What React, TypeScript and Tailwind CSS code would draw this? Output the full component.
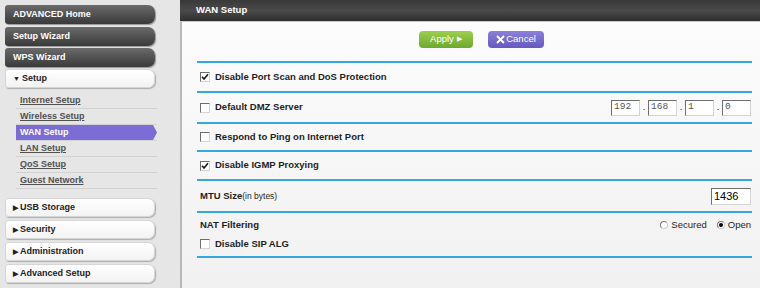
import React from "react";

function Check({ checked }: { checked?: boolean }) {
  return (
    <span className="inline-flex h-[10px] w-[10px] shrink-0 items-center justify-center border border-t-[#6e6e6e] border-l-[#6e6e6e] border-r-[#d4d4d4] border-b-[#d4d4d4] bg-white">
      {checked && (
        <svg width="8" height="8" viewBox="0 0 8 8">
          <path d="M1 3.8 L3 6 L7 1.2" stroke="#1a1a1a" strokeWidth="1.6" fill="none" />
        </svg>
      )}
    </span>
  );
}

function Radio({ on }: { on?: boolean }) {
  return (
    <span className="inline-flex h-[8px] w-[8px] items-center justify-center rounded-full border border-t-[#777] border-l-[#777] border-r-[#ccc] border-b-[#ccc] bg-white">
      {on && <span className="h-[4px] w-[4px] rounded-full bg-black" />}
    </span>
  );
}

function Line() {
  return <div className="h-[2px] bg-[#35a8df]" />;
}

function DarkBtn({ label }: { label: string }) {
  return (
    <div className="flex h-[19px] w-[150px] items-center rounded-l-[3px] rounded-r-[7px] bg-linear-to-b from-[#6b6b6b] to-[#3a3a3a] pl-[8px] text-[9px] font-bold text-white shadow-[1px_1px_1px_rgba(0,0,0,0.35)]">
      {label}
    </div>
  );
}

function LightBtn({ label, open }: { label: string; open?: boolean }) {
  return (
    <div className="flex h-[19px] w-[150px] items-center gap-[2px] rounded-l-[3px] rounded-r-[7px] border border-[#d6d6d6] bg-linear-to-b from-white to-[#f3f3f3] pl-[7px] text-[9px] font-bold text-[#222] shadow-[1px_1px_1px_rgba(0,0,0,0.25)]">
      <span className="text-[7px] leading-none">{open ? "▼" : "▶"}</span>
      {label}
    </div>
  );
}

const subItems = [
  "Internet Setup",
  "Wireless Setup",
  "WAN Setup",
  "LAN Setup",
  "QoS Setup",
  "Guest Network",
];

export default function App() {
  const ip = ["192", "168", "1", "0"];
  return (
    <div className="flex h-[288px] w-[760px] overflow-hidden bg-[#e6e6e6] font-['Liberation_Sans',Arial,sans-serif]">
      <aside className="flex w-[180px] shrink-0 flex-col pl-[5px] pt-[5px]">
        <div className="flex flex-col gap-[2px]">
          <DarkBtn label="ADVANCED Home" />
          <div className="mt-[1px]">
            <DarkBtn label="Setup Wizard" />
          </div>
          <DarkBtn label="WPS Wizard" />
          <LightBtn label="Setup" open />
        </div>
        <div className="ml-[11px] mt-[5px] w-[141px]">
          {subItems.map((item) => (
            <div
              key={item}
              className="flex h-[16px] items-center border-b border-[#d2d2d2]"
            >
              {item === "WAN Setup" ? (
                <div className="flex h-[15px] w-full items-center bg-[#7b6cd6] pl-[4px] text-[9px] font-bold text-white [clip-path:polygon(0_0,calc(100%-4px)_0,100%_50%,calc(100%-4px)_100%,0_100%)]">
                  {item}
                </div>
              ) : (
                <span className="pl-[4px] text-[9px] font-bold text-[#505050] underline">
                  {item}
                </span>
              )}
            </div>
          ))}
        </div>
        <div className="mt-[9px] flex flex-col gap-[3px]">
          <LightBtn label="USB Storage" />
          <LightBtn label="Security" />
          <LightBtn label="Administration" />
          <LightBtn label="Advanced Setup" />
        </div>
      </aside>

      <main className="flex flex-1 flex-col">
        <div className="flex h-[22px] items-center border-b border-[#c8c8c8] bg-linear-to-b from-[#3a3a3a] via-[#4a4a4a] to-[#2f2f2f] pl-[16px] text-[9.5px] font-bold text-white">
          WAN Setup
        </div>
        <div className="flex-1 border-l-2 border-[#b8b8b8] bg-linear-to-b from-[#fcfcfc] to-[#f1f1f1] pl-[15px] pr-[8px] text-[9.5px] text-[#1e1e1e]">
          <div className="mt-[9px] flex h-[17px] gap-[15px] pl-[222px]">
            <button className="flex h-[17px] w-[54px] items-center justify-center gap-[3px] rounded-[4px] bg-linear-to-b from-[#9dce4e] to-[#6da92e] text-[9.5px] text-white">
              Apply <span className="text-[7px]">▶</span>
            </button>
            <button className="flex h-[17px] w-[56px] items-center justify-center rounded-[4px] bg-linear-to-b from-[#8c80dc] to-[#6658bf] text-[9.5px] text-white">
              <svg width="9" height="9" viewBox="0 0 9 9" className="mr-[1px]">
                <path d="M1 1 L8 8 M8 1 L1 8" stroke="white" strokeWidth="1.8" />
              </svg>
              Cancel
            </button>
          </div>
          <div className="mt-[13px]">
            <Line />
            <div className="flex h-[28px] items-center gap-[5px] pl-[3px] font-bold">
              <Check checked />
              Disable Port Scan and DoS Protection
            </div>
            <Line />
            <div className="flex h-[29px] items-center justify-between pl-[3px] pr-[1px]">
              <div className="flex items-center gap-[5px] font-bold">
                <Check />
                Default DMZ Server
              </div>
              <div className="flex items-center">
                {ip.map((v, i) => (
                  <React.Fragment key={i}>
                    {i > 0 && <span className="w-[8px] text-center">.</span>}
                    <div className="flex h-[16px] w-[29px] items-center border border-t-[#6e6e6e] border-l-[#6e6e6e] border-r-[#d4d4d4] border-b-[#d4d4d4] bg-white pl-[2px] font-['Liberation_Mono',monospace] text-[9.5px] text-[#555]">
                      {v}
                    </div>
                  </React.Fragment>
                ))}
              </div>
            </div>
            <Line />
            <div className="flex h-[26px] items-center gap-[5px] pl-[3px] font-bold">
              <Check />
              Respond to Ping on Internet Port
            </div>
            <Line />
            <div className="flex h-[27px] items-center gap-[5px] pl-[3px] font-bold">
              <Check checked />
              Disable IGMP Proxying
            </div>
            <Line />
            <div className="flex h-[30px] items-center justify-between pl-[3px] pr-[1px]">
              <div>
                <span className="font-bold">MTU Size</span>
                <span className="text-[8.5px]">(in bytes)</span>
              </div>
              <div className="flex h-[17px] w-[40px] items-center border border-t-[#6e6e6e] border-l-[#6e6e6e] border-r-[#d4d4d4] border-b-[#d4d4d4] bg-white pl-[2px] text-[11px] text-black">
                1436
              </div>
            </div>
            <Line />
            <div className="flex h-[43px] flex-col justify-center gap-[5px] pl-[3px] pr-[1px]">
              <div className="flex items-center justify-between">
                <span className="font-bold">NAT Filtering</span>
                <div className="flex items-center gap-[3px]">
                  <Radio />
                  <span className="mr-[7px]">Secured</span>
                  <Radio on />
                  <span>Open</span>
                </div>
              </div>
              <div className="flex items-center gap-[5px] font-bold">
                <Check />
                Disable SIP ALG
              </div>
            </div>
            <Line />
          </div>
        </div>
      </main>
    </div>
  );
}
